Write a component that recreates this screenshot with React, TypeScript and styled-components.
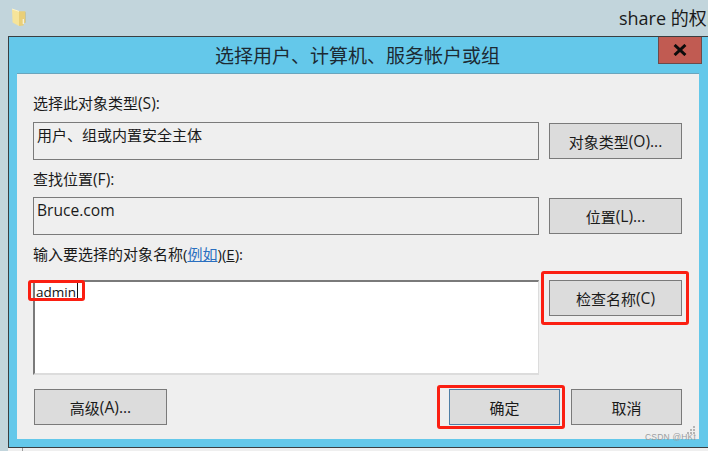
import React from "react";
import styled, { createGlobalStyle } from "styled-components";

const Global = createGlobalStyle`
  html, body { margin: 0; padding: 0; width: 708px; height: 451px; overflow: hidden; background: #c2d5dc; }
  body { font-family: "Noto Sans", "Noto Sans CJK SC", sans-serif; color: #111; }
`;

const CJK = `"Open Sans", "Noto Sans CJK SC", sans-serif`;

const Page = styled.div`
  width: 708px;
  height: 451px;
  display: flex;
  flex-direction: column;
  overflow: hidden;
  position: relative;
`;

const TopStrip = styled.div`
  height: 36px;
  flex: none;
  display: flex;
  align-items: flex-start;
  justify-content: space-between;
  padding-left: 11px;
  padding-top: 7px;
  box-sizing: border-box;
  overflow: hidden;
`;

const ParentTitle = styled.div`
  font-family: ${CJK};
  font-size: 18px;
  line-height: 22px;
  color: #1a1a1a;
  white-space: nowrap;
  width: 89px;
  overflow: hidden;
`;

const Win = styled.div`
  margin-left: 8px;
  width: 700px;
  height: 412px;
  flex: none;
  box-sizing: border-box;
  border: 1px solid #3a3f42;
  border-right: 0;
  background: #64c8ea;
  display: flex;
  flex-direction: column;
  padding: 0 8px 8px 8px;
`;

const TitleBar = styled.div`
  height: 37px;
  flex: none;
  position: relative;
  display: flex;
  justify-content: center;
  align-items: center;
`;

const TitleText = styled.div`
  font-family: ${CJK};
  font-size: 19px;
  line-height: 26px;
  color: #1c2a33;
  margin-left: -2px;
`;

const Close = styled.div`
  position: absolute;
  top: 0;
  right: -2px;
  width: 44px;
  height: 27px;
  box-sizing: border-box;
  background: #c15b52;
  border: 1px solid #6c4a4a;
  border-top: 0;
  display: flex;
  align-items: center;
  justify-content: center;
`;

const Panel = styled.div`
  flex: 1;
  background: #efefef;
  box-shadow: 0 -1px 0 #6aa5bd;
  padding: 20px 17px 14px 16px;
  box-sizing: border-box;
  display: flex;
  flex-direction: column;
  position: relative;
  width: 682px;
`;

const Label = styled.div<{ $top?: number }>`
  font-family: ${CJK};
  font-size: 15px;
  line-height: 19px;
  height: 19px;
  margin-top: ${(p) => p.$top ?? 0}px;
  color: #1a1a1a;
  white-space: nowrap;
`;

const Row = styled.div<{ $top?: number }>`
  display: grid;
  grid-template-columns: 506px 133px;
  column-gap: 10px;
  margin-top: ${(p) => p.$top ?? 0}px;
`;

const Field = styled.div`
  height: 38px;
  box-sizing: border-box;
  border: 1px solid #7a7a7a;
  padding: 3px 3px;
  font-family: ${CJK};
  font-size: 15px;
  line-height: 19px;
  color: #1a1a1a;
`;

const Latin = styled.span`
  font-size: 15.6px;
`;

const TextArea = styled.div`
  height: 95px;
  box-sizing: border-box;
  background: #fff;
  border-top: 2px solid #7a7a7a;
  border-left: 2px solid #7a7a7a;
  border-right: 1px solid #dcdcdc;
  border-bottom: 2px solid #dcdcdc;
  padding: 1px 1px;
  font-family: ${CJK};
  font-size: 13.5px;
  line-height: 18px;
  color: #111;
  display: flex;
  align-items: flex-start;
`;

const Caret = styled.span`
  display: inline-block;
  width: 1px;
  height: 17px;
  background: #111;
  margin-left: 1px;
`;

const Btn = styled.div<{ $w?: number; $focus?: boolean }>`
  width: ${(p) => p.$w ?? 133}px;
  height: 36px;
  flex: none;
  align-self: start;
  box-sizing: border-box;
  background: #dcdcdc;
  border: 1px solid ${(p) => (p.$focus ? "#4f7fa6" : "#7a7a7a")};
  display: flex;
  align-items: center;
  justify-content: center;
  font-family: ${CJK};
  font-size: 15px;
  color: #1a1a1a;
  white-space: nowrap;
`;

const FieldBtn = styled(Btn)`
  margin-top: 1px;
`;

const Footer = styled.div`
  display: flex;
  margin-top: 14px;
  padding-left: 1px;
  gap: 11px;
`;

const Spacer = styled.div`
  flex: 1;
`;

const Link = styled.span`
  color: #2a6fc0;
  text-decoration: underline;
`;

const U = styled.span`
  text-decoration: underline;
`;

const Mark = styled.div<{ $x: number; $y: number; $w: number; $h: number }>`
  position: absolute;
  left: ${(p) => p.$x}px;
  top: ${(p) => p.$y}px;
  width: ${(p) => p.$w}px;
  height: ${(p) => p.$h}px;
  box-sizing: border-box;
  border: 3px solid #fb1f12;
  border-radius: 3px;
  pointer-events: none;
`;

const Under = styled.div`
  flex: 1;
  position: relative;
  background: #efefef;
`;

const UnderLine = styled.div`
  position: absolute;
  left: 22px;
  top: 0;
  bottom: 0;
  width: 1px;
  background: #9a9a9a;
`;

const UnderEdge = styled.div`
  position: absolute;
  left: 0;
  top: 0;
  bottom: 0;
  width: 8px;
  background: #c2d5dc;
`;

const Watermark = styled.div`
  position: absolute;
  left: 645px;
  top: 432px;
  font-family: "Liberation Sans", sans-serif;
  font-size: 8.5px;
  letter-spacing: 0.2px;
  line-height: 11px;
  color: #9b9ea0;
  white-space: nowrap;
`;

const Grip = styled.svg`
  position: absolute;
  left: 685px;
  top: 426px;
`;

const Folder = () => (
  <svg width="17" height="19" viewBox="0 0 17 19">
    <path d="M12 5h2l1 .6v10L13 16z" fill="#8fa3a8" opacity=".5" />
    <path d="M1 2l7 2.4V19L1.6 15.6z" fill="#f6e49a" />
    <path d="M8 4.2h6.4v11.6l-1.6.4-.3 2.2-4.5.6z" fill="#e9cf78" />
    <path d="M1 2l7 2.4" stroke="#fff5c8" fill="none" />
    <path d="M12.3 12v5" stroke="#f8f4e0" strokeWidth="1.2" />
  </svg>
);

const X = () => (
  <svg width="14" height="12" viewBox="0 0 14 12">
    <path d="M1.6 1l10.8 10M12.4 1L1.6 11" stroke="#0c0c0c" strokeWidth="3" fill="none" />
  </svg>
);

export default function App() {
  return (
    <Page>
      <Global />
      <TopStrip>
        <Folder />
        <ParentTitle>share 的权限</ParentTitle>
      </TopStrip>
      <Win>
        <TitleBar>
          <TitleText>选择用户、计算机、服务帐户或组</TitleText>
          <Close>
            <X />
          </Close>
        </TitleBar>
        <Panel>
          <Label>
            选择此对象类型<Latin>(S):</Latin>
          </Label>
          <Row $top={9}>
            <Field>用户、组或内置安全主体</Field>
            <FieldBtn>
              对象类型<Latin>(O)...</Latin>
            </FieldBtn>
          </Row>
          <Label $top={10}>
            查找位置<Latin>(F):</Latin>
          </Label>
          <Row $top={8}>
            <Field>
              <Latin>Bruce.com</Latin>
            </Field>
            <FieldBtn>
              位置<Latin>(L)...</Latin>
            </FieldBtn>
          </Row>
          <Label $top={10}>
            输入要选择的对象名称(<Link>例如</Link>)(<U>E</U>):
          </Label>
          <Row $top={16}>
            <TextArea>
              admin
              <Caret />
            </TextArea>
            <Btn>
              检查名称<Latin>(C)</Latin>
            </Btn>
          </Row>
          <Footer>
            <Btn>
              高级<Latin>(A)...</Latin>
            </Btn>
            <Spacer />
            <Btn $w={111} $focus>
              确定
            </Btn>
            <Btn $w={111}>取消</Btn>
          </Footer>
        </Panel>
      </Win>
      <Under>
        <UnderEdge />
        <UnderLine />
      </Under>
      <Grip width="12" height="12" viewBox="0 0 12 12">
        <g fill="#b4b4b4">
          <rect x="8" y="0" width="2" height="2" />
          <rect x="5" y="3" width="2" height="2" />
          <rect x="8" y="3" width="2" height="2" />
          <rect x="2" y="6" width="2" height="2" />
          <rect x="5" y="6" width="2" height="2" />
          <rect x="8" y="6" width="2" height="2" />
        </g>
      </Grip>
      <Watermark>CSDN @HKt</Watermark>
      <Mark $x={28} $y={280} $w={57} $h={21} />
      <Mark $x={541} $y={271} $w={148} $h={54} />
      <Mark $x={437} $y={385} $w={128} $h={44} />
    </Page>
  );
}
